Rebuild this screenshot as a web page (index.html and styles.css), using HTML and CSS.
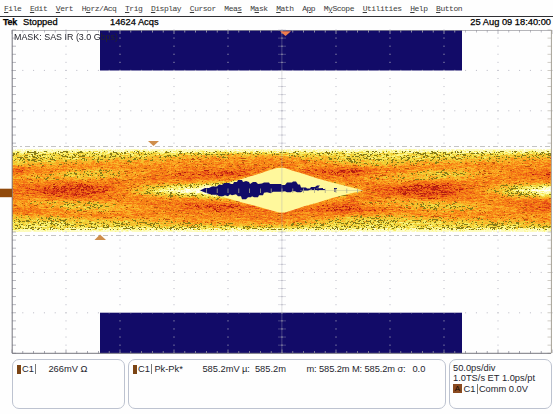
FILE: index.html
```html
<!DOCTYPE html>
<html lang="en">
<head>
<meta charset="utf-8">
<title>Tek oscilloscope</title>
<link rel="stylesheet" href="styles.css">
</head>
<body>
<nav class="menu">
<span><u>F</u>ile</span><span><u>E</u>dit</span><span><u>V</u>ert</span><span>H<u>o</u>rz/Acq</span><span><u>T</u>rig</span><span><u>D</u>isplay</span><span><u>C</u>ursor</span><span>Mea<u>s</u></span><span>M<u>a</u>sk</span><span><u>M</u>ath</span><span>A<u>p</u>p</span><span>M<u>y</u>Scope</span><span><u>U</u>tilities</span><span><u>H</u>elp</span><span><u>B</u>utton</span>
</nav>
<header class="status">
<b class="brand">Tek</b><span class="state">Stopped</span><span class="acqs">14624 Acqs</span><span class="date">25 Aug 09 18:40:00</span>
</header>
<main class="scope">
<canvas class="trace" id="trace" width="553" height="327"></canvas>
<svg class="overlay" viewBox="0 28 553 327" width="553" height="327">
<rect x="100" y="30" width="362" height="40.5" fill="#120b68"/>
<rect x="100" y="312.7" width="362" height="40.5" fill="#120b68"/>
<path fill="#fff89c" d="M199 190L212 187L225 183.500L237 180.500L248 177L260 173.500L270 170L277 168H285L292 170.500L304 174L316 178L330 182L346 186L363 190.500L348 194L332 198L318 202.500L305 206L293 210L285 212.500H279L268 209.500L256 206L244 203L230 199L215 195Z"/>
<path fill="#120b68" d="M200 190.500l5-2.500 4 0 3-1.500 5 0 2-2 3 .5 2-2 5 0 2 1 2 0 1-2 3 0 1-2 4 0 1 2 3-1 3 1 1 2 3-2 3 0 2 2 4-.5 2-1 5 0 1 1.500 4 0 3 0 4 0 1 1 3 0 2-2.500 5 0 1-1 3 0 2 3 2 0 1 3 5 0 1 1 3 0 1-1.500 4 0 2-1.500 3 0-2 2-2 1 7-.5 0 1.300-8 0-5 .5-2 1-5 0-2 1.500-4 0-2-1-3 0-1 1-4 0-2-1-4 .5-4 0-4 0-2 1.500-4-1-3 .5-1 2.500-4 0-1 2-4 0-2-1-1 1-3 0-2 2-4 0-1-3-3 0-2-2-4 1-2-1-2 2-3-1-2 1-4 0-2-1.500-5 0-5-1.500z"/>
<path stroke="#120b68" stroke-width="1" d="M312 189.500H325M334 188.5h3M335 188v4M318 187v4"/>
<g id="graticule"></g>
<path d="M12 30.5H552" stroke="#96969c" stroke-width=".7"/>
<path d="M12.2 30V353.3H551" stroke="#76767e" fill="none"/>
<path d="M551.4 30V353" stroke="#a5a095" stroke-width="1"/>
<path d="M12 146.5H552M12 235.5H552" stroke="#b5b5b5" stroke-width=".8" stroke-dasharray="5 3 2 3"/>
<path d="M280 31.2H291L285.5 36Z" fill="#ee7d4c"/>
<path d="M148 141H159L153.500 146Z" fill="#cf8e4b"/>
<path d="M94.500 240H106L100 234.500Z" fill="#cf8e4b"/>
<rect x="0" y="188.700" width="12" height="8.500" fill="#914a0b"/>
<text class="mask-label" x="14" y="39.500" textLength="104" lengthAdjust="spacingAndGlyphs">MASK: SAS IR (3.0 Gbps)</text>
</svg>
</main>
<footer class="panels">
<section class="panel channel"><i class="chip"></i><span>C1</span><i class="bar"></i><span class="volts">266mV Ω</span></section>
<section class="panel measure"><i class="chip"></i><span>C1</span><i class="bar"></i><span class="kind">Pk-Pk*</span><span class="value">585.2mV</span><span class="mu">µ:</span><span class="mean">585.2m</span><span class="range">m: 585.2m M: 585.2m σ:</span><span class="sigma">0.0</span></section>
<section class="panel timebase"><div>50.0ps/div</div><div>1.0TS/s ET 1.0ps/pt</div><div class="trigger"><i class="source">A</i><span>C1</span><i class="bar"></i><span class="level">Comm 0.0V</span></div></section>
</footer>
<script src="scope.js"></script>
</body>
</html>
```
FILE: styles.css
```css
* { box-sizing: border-box; }
body {
  margin: 0;
  width: 553px;
  height: 414px;
  overflow: hidden;
  background: #fefefe;
  color: #25252d;
  font-family: "Liberation Sans", Arial, sans-serif;
  font-size: 9.3px;
}
i { font-style: normal; }
.menu {
  display: flex;
  gap: 8.64px;
  height: 17px;
  padding: 4px 0 0 4px;
  border-bottom: 1px solid #303034;
  font: 8px/10px "Liberation Mono", monospace;
  letter-spacing: -.48px;
  color: #3c3c3c;
  white-space: nowrap;
}
.menu u { text-underline-offset: 1px; text-decoration-thickness: 1px; }
.status {
  display: flex;
  height: 11px;
  padding: 0 2px 0 3px;
  line-height: 11px;
  color: #000;
  -webkit-text-stroke: .25px #000;
  white-space: nowrap;
}
.brand { width: 20px; font-size: 9px; letter-spacing: -.3px; }
.state { width: 87px; }
.acqs { flex: 1; }
.scope { position: relative; height: 327px; }
.trace, .overlay { position: absolute; left: 0; top: 0; display: block; }
.mask-label { font-size: 9.6px; fill: #24242c; }
.panels {
  display: grid;
  grid-template-columns: 113px 317.500px 103px;
  gap: 3px;
  padding: 4px 0 0 12px;
  white-space: nowrap;
}
.panel {
  height: 50px;
  border: 1px solid #bdc3d0;
  border-radius: 7px;
  line-height: 10px;
}
.channel, .measure { display: flex; padding: 4px 0 0 3.500px; }
.chip { width: 4px; height: 9px; margin: .5px 1.500px 0 0; background: #7b4414; }
.bar { width: 1px; height: 10px; margin-left: 1.500px; background: #777; }
.volts { margin-left: 12px; }
.kind { margin-left: 2px; width: 48px; }
.value { width: 39.500px; }
.mu { width: 13px; }
.mean { width: 51.500px; }
.range { width: 106px; letter-spacing: -.1px; }
.timebase { padding: 3px 0 0 3.500px; line-height: 10.400px; }
.trigger { display: flex; }
.source {
  width: 9px;
  height: 9px;
  margin: .5px 1.500px 0 0;
  background: #8a4a20;
  color: #160b05;
  font-size: 8px;
  line-height: 9px;
  text-align: center;
}
.level { margin-left: 1px; }
```
FILE: scope.js
```js
// Hit density of the eye diagram: rows are x positions, columns distances from the centre line.
const distances = [0, 4, 8, 12, 16, 20, 24, 28, 32, 36, 39, 42];
const density = [
  [12, .72, .72, .70, .60, .68, .80, .62, .45, .38, .35, .25, 0],
  [45, .86, .80, .66, .56, .60, .70, .62, .48, .38, .35, .25, 0],
  [72, .89, .86, .77, .52, .45, .60, .67, .55, .40, .35, .25, 0],
  [100, .84, .80, .73, .57, .46, .56, .67, .60, .44, .36, .25, 0],
  [130, .62, .66, .70, .68, .62, .62, .68, .60, .48, .38, .25, 0],
  [160, .26, .46, .66, .72, .72, .69, .66, .62, .54, .40, .25, 0],
  [190, .03, .28, .62, .74, .80, .73, .67, .66, .60, .43, .25, 0],
  [230, 0, .15, .45, .72, .84, .80, .70, .67, .62, .46, .25, 0],
  [282, 0, 0, .2, .4, .6, .70, .72, .70, .66, .46, .25, 0],
  [320, 0, .3, .5, .68, .78, .82, .69, .62, .50, .38, .25, 0],
  [350, .45, .62, .70, .73, .82, .84, .66, .48, .40, .35, .25, 0]
];
density.slice(0, 7).forEach(row => density.push([row[0] + 355, ...row.slice(1)]));

let seed = 7;
function random() {
  seed = (seed * 1664525 + 1013904223) >>> 0;
  return seed / 4294967296;
}

function sample(x, d) {
  let r = 0, c = 0;
  while (r < density.length - 2 && density[r + 1][0] < x) r++;
  while (c < distances.length - 2 && distances[c + 1] < d) c++;
  const a = density[r], b = density[r + 1];
  const s = (x - a[0]) / (b[0] - a[0]);
  const t = (d - distances[c]) / (distances[c + 1] - distances[c]);
  return (a[c + 1] * (1 - t) + a[c + 2] * t) * (1 - s) + (b[c + 1] * (1 - t) + b[c + 2] * t) * s;
}

const stops = [
  [0, 254, 254, 250], [.12, 255, 253, 200], [.28, 250, 243, 115], [.42, 238, 208, 50],
  [.55, 251, 178, 40], [.67, 248, 140, 22], [.79, 240, 108, 22], [.9, 222, 62, 20], [1, 180, 26, 18]
];
function colour(v) {
  v = Math.max(0, Math.min(1, v));
  let i = 0;
  while (i < stops.length - 2 && stops[i + 1][0] < v) i++;
  const t = (v - stops[i][0]) / (stops[i + 1][0] - stops[i][0]);
  return [1, 2, 3].map(k => stops[i][k] * (1 - t) + stops[i + 1][k] * t);
}

const ctx = document.getElementById('trace').getContext('2d');
for (let y = 149; y < 232; y++) {
  let drift = 0, speck = 0;
  for (let x = 12; x < 551; x++) {
    drift = drift * .5 + (random() - .5) * .22;
    const d = Math.abs(y - 190);
    const v = sample(x, d);
    let rgb = colour(v < .02 ? 0 : v + drift);
    if (d > 37 && random() < (d - 36) * .13) rgb = [253, 251, 190];
    const chance = d > 36 ? .16 : v < .5 ? .16 : v < .62 ? .09 : v > .8 ? .09 : .025;
    if (v > .2 && d < 41 && (random() < chance || (speck && random() < .3))) {
      rgb = v > .75 ? [178, 30, 16] : v > .6 ? [190, 84, 14] : [136, 124, 24];
      speck = 1;
    } else {
      speck = 0;
    }
    ctx.fillStyle = `rgb(${rgb.map(Math.round)})`;
    ctx.fillRect(x, y - 28, 1, 1);
  }
}

// Dotted divisions, edge ticks and the centre axes.
let marks = '';
const rect = (x, y, w, h, fill) => { marks += `<rect x="${x}" y="${y}" width="${w}" height="${h}" fill="${fill}"/>`; };
for (let i = 0; i <= 50; i++) {
  const x = 12 + i * 10.8;
  for (let j = 1; j < 8; j++) {
    if (j !== 3 && j !== 4 && j !== 5) rect(x - .5, 30 + j * 40.4 - .5, 1, 1, '#b9b9c4');
  }
  const long = i % 5 === 0;
  rect(x - .4, 30, .8, long ? 4 : 2.5, '#aaaab5');
  rect(x - .4, long ? 349.500 : 351, .8, long ? 3.5 : 2.5, '#92929e');
  if (x > 205 && x < 360) rect(x - .4, 188.500, .8, 4.5, '#a9a98d');
}
for (let i = 0; i <= 40; i++) {
  const y = 30 + i * 8.08;
  if (y > 149 && y < 231) continue;
  for (let j = 1; j < 10; j++) rect(12 + j * 54 - .5, y - .5, 1, 1, '#b9b9c4');
  rect(12, y - .4, 4, .8, '#a8a8b0');
  rect(547.5, y - .4, 4, .8, '#c4c0b8');
  rect(278, y - .4, 8, .8, '#a8a8b877');
}
rect(281.5, 30, .8, 323, '#a5a5b277');
rect(300, 190.3, 63, .6, '#a9a98d99');
document.getElementById('graticule').innerHTML = marks;
```
